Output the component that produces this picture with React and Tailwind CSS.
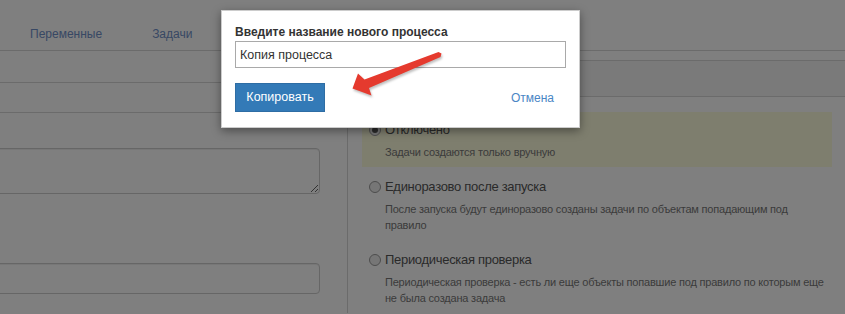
import React from 'react'

const options = [
  {
    label: 'Отключено',
    text: 'Задачи создаются только вручную',
    checked: true,
  },
  {
    label: 'Единоразово после запуска',
    text: 'После запуска будут единоразово созданы задачи по объектам попадающим под правило',
  },
  {
    label: 'Периодическая проверка',
    text: 'Периодическая проверка - есть ли еще объекты попавшие под правило по которым еще не была создана задача',
  },
]

function Radio({ checked }) {
  return (
    <span className="flex h-[12px] w-[12px] items-center justify-center rounded-full border border-[#9a9a9a] bg-[#ececec]">
      {checked && <span className="h-[6px] w-[6px] rounded-full bg-[#555]" />}
    </span>
  )
}

function Arrow() {
  return (
    <svg className="pointer-events-none absolute left-0 top-0 z-30" width="845" height="314">
      <polygon
        points="352.5,88.5 358,73.5 364.5,79.5 438.5,52 441.5,53.5 440.5,57 369,88 371.5,95.5"
        fill="#e53a2e"
        style={{ filter: 'drop-shadow(1px 2px 1px rgba(0,0,0,0.25))' }}
      />
    </svg>
  )
}

export default function App() {
  return (
    <div className="relative h-[314px] w-[845px] overflow-hidden bg-white font-['Liberation_Sans',Arial,sans-serif]">
      <div className="flex h-[51px] items-end border-b border-[#d6d6d6] pb-[7px] text-[12px] text-[#7090c8]">
        <span className="pl-[30px]">Переменные</span>
        <span className="ml-[50px]">Задачи</span>
      </div>

      <div className="flex">
        <div className="w-[348px] shrink-0 border-r border-[#d6d6d6] pr-[28px]">
          <div className="mt-[31px] h-[31px] border-y border-[#d6d6d6]" />
          <textarea className="ml-[-20px] mt-[35px] block h-[46px] w-[340px] rounded-[4px] border border-[#cccccc] shadow-[inset_0_1px_1px_rgba(0,0,0,0.075)]" />
          <div className="ml-[-20px] mt-[69px] h-[31px] w-[340px] rounded-[4px] border border-[#cccccc] shadow-[inset_0_1px_1px_rgba(0,0,0,0.075)]" />
        </div>

        <div className="flex-1">
          <div className="mt-[9px] h-[37px] border-y border-[#d6d6d6] bg-[#f5f5f5]" />
          <div className="ml-[14px] mr-[13px] mt-[15px] flex flex-col gap-[2px]">
            {options.map((o) => (
              <div
                key={o.label}
                className={`pb-[7px] pl-[7px] pr-[4px] pt-[10px] ${o.checked ? 'bg-[#fdfcdd]' : ''}`}
              >
                <div className="flex items-center gap-[4px] text-[13px] leading-[16px] tracking-[-0.3px] text-[#555]">
                  <Radio checked={o.checked} />
                  <span>{o.label}</span>
                </div>
                <p className="mt-[6px] pl-[16px] text-[11px] leading-[16px] tracking-[-0.2px] text-[#777]">{o.text}</p>
              </div>
            ))}
          </div>
        </div>
      </div>

      <div className="absolute inset-0 z-10 bg-black/50" />

      <div className="absolute left-[221px] top-[10px] z-20 w-[359px] border border-black/20 bg-white px-[13px] pb-[15px] pt-[12px] shadow-[0_3px_9px_rgba(0,0,0,0.4)]">
        <div className="text-[12px] font-bold leading-[18px] text-[#333]">Введите название нового процесса</div>
        <input
          defaultValue="Копия процесса"
          className="block h-[27px] w-full border border-[#a9a9a9] px-[4px] text-[12.5px] text-[#333] outline-none"
        />
        <div className="mt-[15px] flex items-center justify-between">
          <button className="h-[29px] w-[90px] border border-[#2e6da4] bg-[#337ab7] text-[12.5px] text-white">
            Копировать
          </button>
          <span className="pr-[12px] text-[12px] text-[#4a86c5]">Отмена</span>
        </div>
      </div>

      <Arrow />
    </div>
  )
}
